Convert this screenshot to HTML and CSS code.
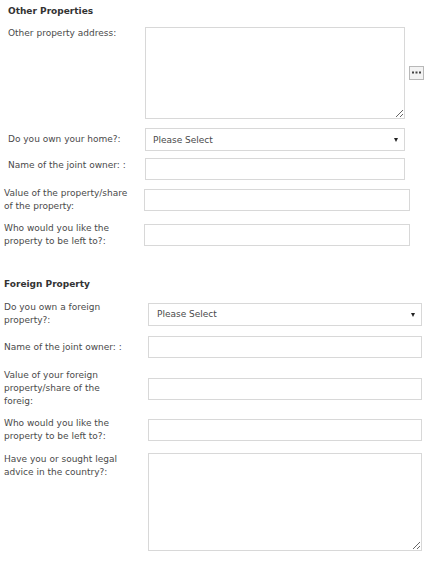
FILE: index.html
```html
<!DOCTYPE html>
<html>
<head>
<meta charset="utf-8">
<link rel="stylesheet" href="styles.css">
</head>
<body>
<div class="page">
  <h3 class="title t1">Other Properties</h3>

  <div class="row a r1">
    <label class="lbl top">Other property address:</label>
    <textarea class="ta ta1"></textarea>
    <button class="dots" type="button"><svg width="9" height="3" viewBox="0 0 9 3"><rect x="0" y="0.5" width="2" height="2" fill="#444"/><rect x="3.5" y="0.5" width="2" height="2" fill="#444"/><rect x="7" y="0.5" width="2" height="2" fill="#444"/></svg></button>
  </div>

  <div class="row a r2">
    <label class="lbl">Do you own your home?:</label>
    <div class="sel-wrap w1"><select class="sel"><option>Please Select</option></select></div>
  </div>

  <div class="row a r3">
    <label class="lbl top nudge">Name of the joint owner: :</label>
    <input class="inp w1" type="text">
  </div>

  <div class="row b r4">
    <label class="lbl">Value of the property/share of the property:</label>
    <input class="inp w2" type="text">
  </div>

  <div class="row b r5">
    <label class="lbl">Who would you like the property to be left to?:</label>
    <input class="inp w2" type="text">
  </div>

  <h3 class="title t2">Foreign Property</h3>

  <div class="row c s1">
    <label class="lbl">Do you own a foreign property?:</label>
    <div class="sel-wrap w3"><select class="sel"><option>Please Select</option></select></div>
  </div>

  <div class="row c s2">
    <label class="lbl nowrap">Name of the joint owner: :</label>
    <input class="inp w3" type="text">
  </div>

  <div class="row c s3">
    <label class="lbl">Value of your foreign property/share of the foreig:</label>
    <input class="inp w3" type="text">
  </div>

  <div class="row c s4">
    <label class="lbl">Who would you like the property to be left to?:</label>
    <input class="inp w3" type="text">
  </div>

  <div class="row c s5">
    <label class="lbl top">Have you or sought legal advice in the country?:</label>
    <textarea class="ta ta2"></textarea>
  </div>
</div>
</body>
</html>
```

FILE: styles.css
```css
html, body {
  margin: 0;
  padding: 0;
  background: #ffffff;
}

body {
  font-family: "DejaVu Sans", Verdana, sans-serif;
  font-size: 9px;
  line-height: 13px;
  color: #4a4a4a;
}

.page {
  padding-top: 5px;
  display: flex;
  flex-direction: column;
}

.title {
  margin: 0;
  font-size: 9px;
  line-height: 13px;
  font-weight: bold;
  color: #333333;
}

.t1 { padding-left: 8px; }
.t2 { padding-left: 4px; margin-top: 30px; }

.row {
  display: flex;
  align-items: center;
}

.row.a { padding-left: 8px; }
.row.a .lbl { width: 137px; }

.row.b { padding-left: 4px; }
.row.b .lbl { width: 128px; margin-right: 12px; }

.row.c { padding-left: 4px; }
.row.c .lbl { width: 116px; margin-right: 28px; }

.lbl {
  display: block;
  flex: none;
}

.lbl.nowrap { white-space: nowrap; }
.lbl.top { align-self: flex-start; }
.lbl.nudge { padding-top: 1px; }

.r1 { margin-top: 9px; }
.r2 { margin-top: 9px; }
.r3 { margin-top: 7px; }
.r4 { margin-top: 7px; }
.r5 { margin-top: 9px; }

.s1 { margin-top: 10px; }
.s2 { margin-top: 9px; }
.s3 { margin-top: 11px; }
.s4 { margin-top: 9px; }
.s5 { margin-top: 10px; }

.inp, .ta, .sel {
  box-sizing: border-box;
  border: 1px solid #d8d8d8;
  background: #ffffff;
  margin: 0;
  font-family: "DejaVu Sans", Verdana, sans-serif;
  font-size: 9px;
  color: #444444;
  outline: none;
  border-radius: 0;
}

.inp { height: 22px; flex: none; }

.w1 { width: 260px; }
.w2 { width: 266px; }
.w3 { width: 274px; }

.ta {
  flex: none;
  resize: both;
  padding: 2px;
}

.ta1 { width: 260px; height: 92px; }
.ta2 { width: 274px; height: 98px; }

.dots {
  flex: none;
  box-sizing: border-box;
  width: 15px;
  height: 14px;
  margin: 0 0 0 4px;
  padding: 4px 0 0 0;
  border: 1px solid #b8b8b8;
  background: #f3f3f3;
  display: flex;
  justify-content: center;
  align-items: flex-start;
}

.dots svg { display: block; }

.sel-wrap {
  position: relative;
  flex: none;
  height: 23px;
}

.sel {
  -webkit-appearance: none;
  appearance: none;
  width: 100%;
  height: 23px;
  padding: 0 0 0 7px;
  color: #4a4a4a;
}

.w3 .sel { padding-left: 8px; }

.sel-wrap::after {
  content: "";
  position: absolute;
  top: 10px;
  right: 7px;
  width: 0;
  height: 0;
  border-left: 2.5px solid transparent;
  border-right: 2.5px solid transparent;
  border-top: 4px solid #222222;
}
```
